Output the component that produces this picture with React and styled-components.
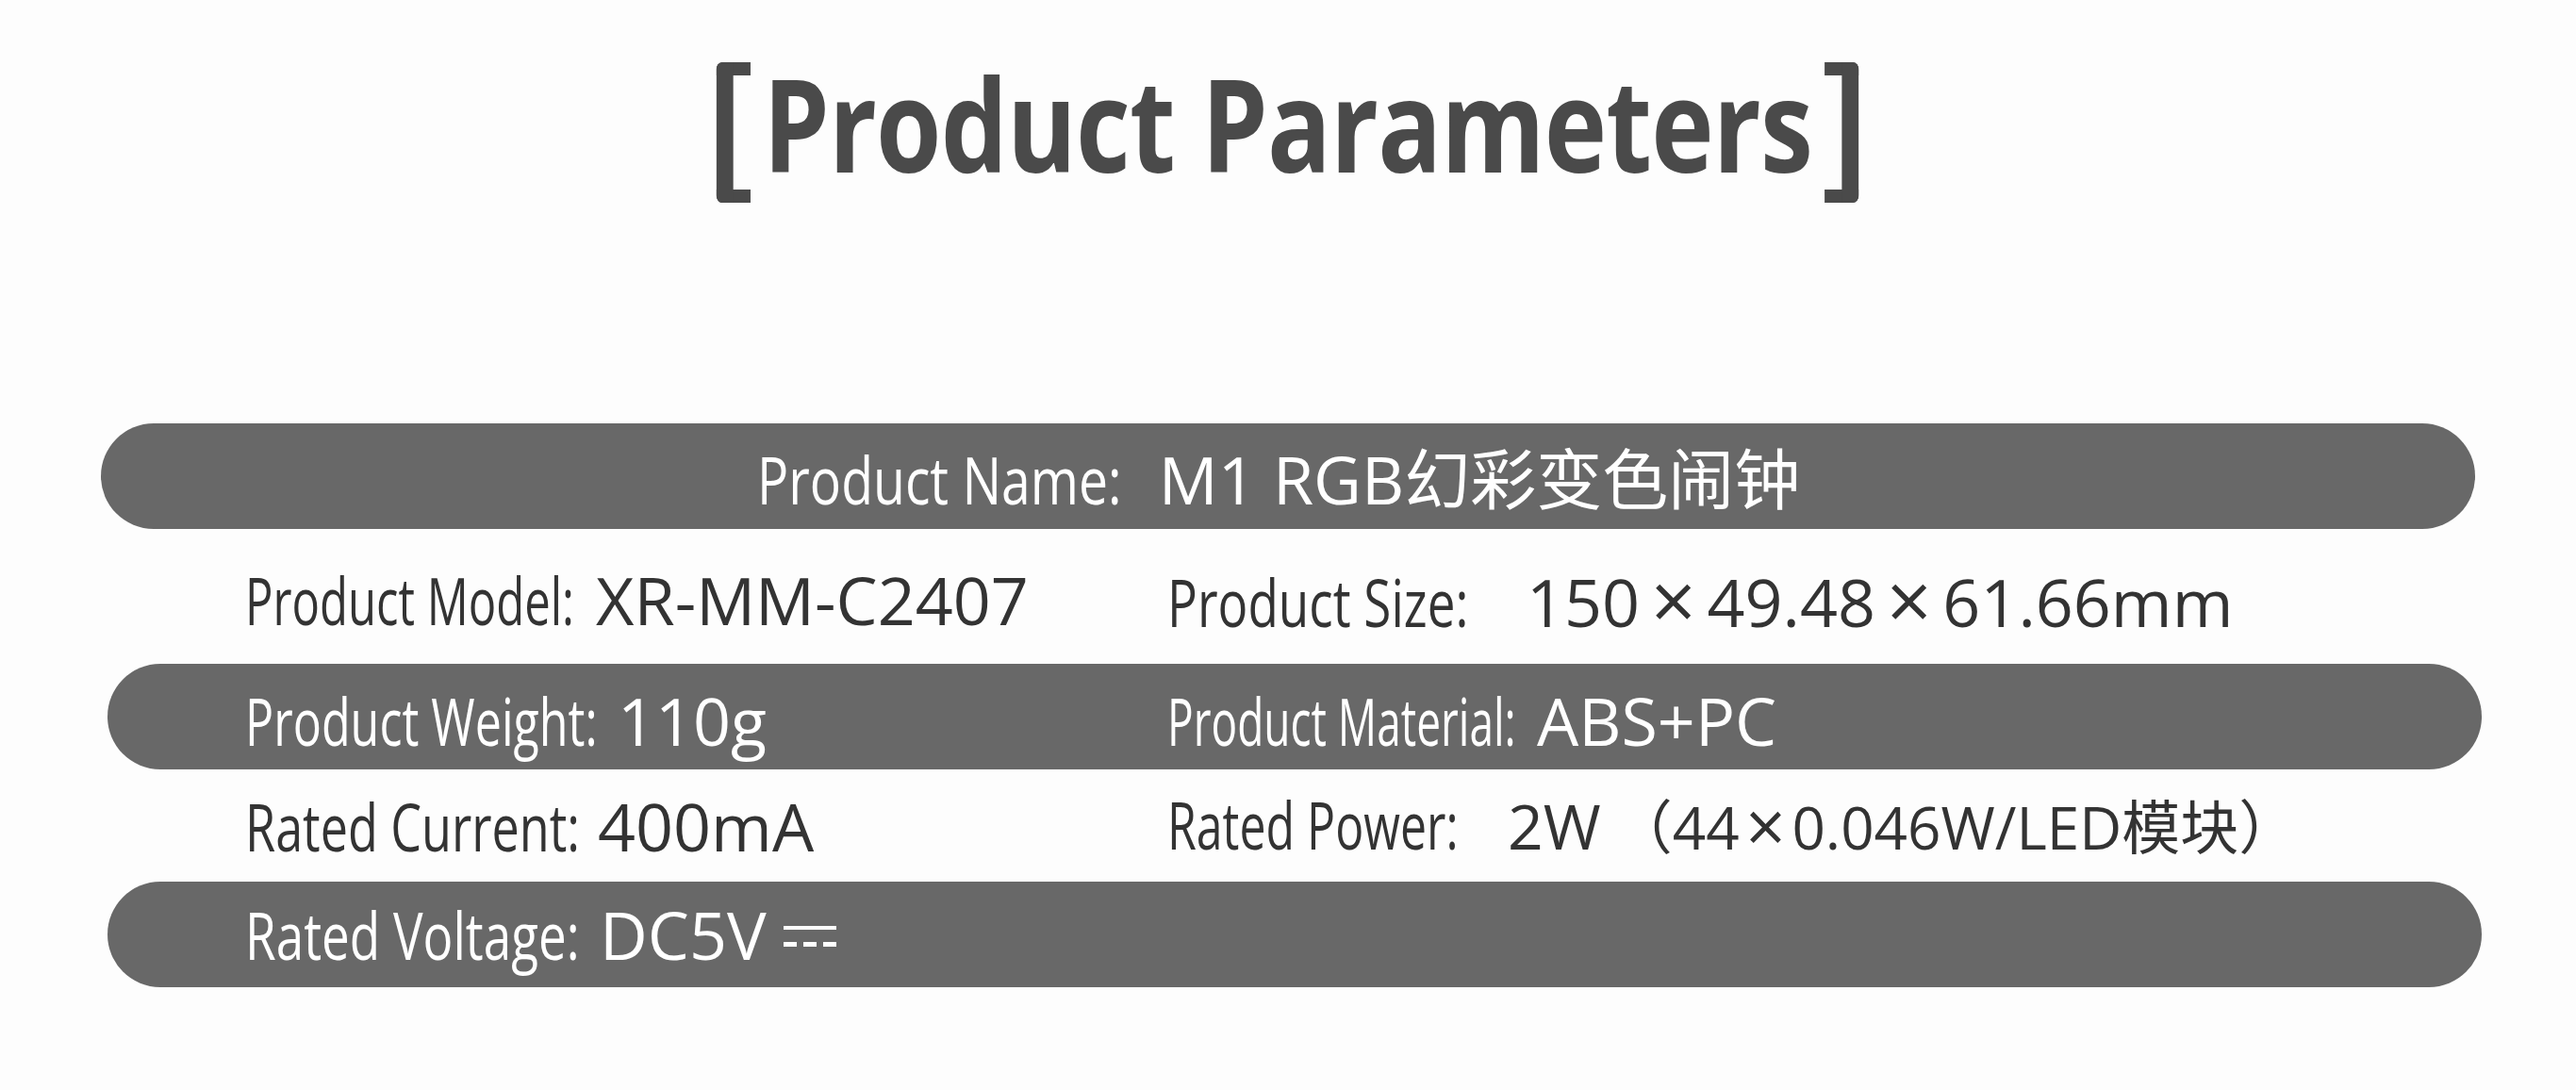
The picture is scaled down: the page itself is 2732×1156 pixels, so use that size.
import React from "react";
import styled, { createGlobalStyle, css } from "styled-components";

const GlobalStyle = createGlobalStyle`
  html, body {
    margin: 0;
    padding: 0;
    background: #fdfdfd;
  }
  body {
    font-family: "Open Sans", "Noto Sans CJK SC", sans-serif;
  }
`;

const Page = styled.div`
  width: 2732px;
  height: 1156px;
  overflow: hidden;
  background: #fdfdfd;
  display: flex;
  flex-direction: column;
`;

const Header = styled.header`
  box-sizing: border-box;
  height: 449px;
  padding-top: 63px;
  display: flex;
  justify-content: center;
  align-items: flex-start;
`;

const TitleRow = styled.h1`
  margin: 0;
  display: flex;
  align-items: center;
  gap: 16px;
  color: #4a4a4a;
  transform: scaleX(0.826);
  transform-origin: center;
`;

const Bracket = styled.span`
  box-sizing: border-box;
  width: 44px;
  height: 149px;
  border: 14px solid #4a4a4a;
  ${(p) =>
    p.$side === "left"
      ? css`
          border-left-width: 22px;
          border-right: none;
          border-radius: 8px 0 0 8px;
        `
      : css`
          border-right-width: 22px;
          border-left: none;
          border-radius: 0 8px 8px 0;
        `}
`;

const TitleText = styled.span`
  font-family: "Open Sans", sans-serif;
  font-weight: 700;
  font-size: 136px;
  line-height: 1;
  letter-spacing: -1px;
  white-space: nowrap;
  padding-bottom: 18px;
`;

const Table = styled.section`
  display: flex;
  flex-direction: column;
`;

const Row = styled.div`
  box-sizing: border-box;
  width: 2518px;
  height: ${(p) => p.$h}px;
  margin-left: ${(p) => p.$x}px;
  padding-left: ${(p) => (p.$center ? 0 : 260 - p.$x)}px;
  padding-right: ${(p) => (p.$center ? 20 : 0)}px;
  padding-top: ${(p) => p.$dy || 0}px;
  display: flex;
  align-items: center;
  justify-content: ${(p) => (p.$center ? "center" : "flex-start")};
  ${(p) =>
    p.$bar
      ? css`
          background: #686868;
          border-radius: 56px;
          color: #ffffff;
        `
      : css`
          color: #333333;
        `}
`;

const Cell = styled.div`
  display: flex;
  align-items: baseline;
  flex: none;
  width: ${(p) => (p.$w ? `${p.$w}px` : "auto")};
  white-space: nowrap;
`;

const Label = styled.span`
  display: inline-block;
  flex: none;
  width: ${(p) => p.$w}px;
  font-size: 70px;
  font-weight: 400;
  line-height: 1;
  white-space: nowrap;
  transform: scaleX(${(p) => p.$sx});
  transform-origin: left center;
`;

const Value = styled.span`
  font-size: ${(p) => p.$size || 70}px;
  font-weight: 400;
  line-height: 1;
  white-space: nowrap;
`;

const Note = styled.span`
  display: inline-block;
  margin-left: 14px;
  font-size: 62px;
  line-height: 1;
`;

const Cross = styled.span`
  display: inline-block;
  width: ${(p) => p.$em || 0.85}em;
  font-size: 1.2em;
  line-height: 1;
  text-align: center;
  vertical-align: -0.04em;
`;

const DcMark = styled.svg`
  flex: none;
  margin-left: 18px;
  width: 56px;
  height: 36px;
`;

const DcSymbol = () => (
  <DcMark viewBox="0 0 56 36" aria-label="direct current">
    <rect x="0" y="0" width="56" height="4" fill="currentColor" />
    <rect x="0" y="17" width="14" height="5" fill="currentColor" />
    <rect x="21" y="17" width="14" height="5" fill="currentColor" />
    <rect x="42" y="17" width="14" height="5" fill="currentColor" />
  </DcMark>
);

const rows = [
  {
    bar: true,
    x: 107,
    h: 112,
    dy: 6,
    center: true,
    cells: [
      {
        label: "Product Name:",
        w: 426,
        sx: 0.79,
        value: "M1 RGB幻彩变色闹钟",
      },
    ],
  },
  {
    bar: false,
    x: 114,
    h: 143,
    dy: 7,
    cells: [
      { label: "Product Model:", w: 372, sx: 0.7, value: "XR-MM-C2407" },
      {
        label: "Product Size:",
        w: 381,
        sx: 0.757,
        value: (
          <>
            150<Cross>×</Cross>49.48<Cross>×</Cross>61.66mm
          </>
        ),
      },
    ],
  },
  {
    bar: true,
    x: 114,
    h: 112,
    dy: 7,
    cells: [
      { label: "Product Weight:", w: 395, sx: 0.717, value: "110g" },
      { label: "Product Material:", w: 392, sx: 0.657, value: "ABS+PC" },
    ],
  },
  {
    bar: false,
    x: 114,
    h: 119,
    dy: 0,
    cells: [
      { label: "Rated Current:", w: 374, sx: 0.744, value: "400mA" },
      {
        label: "Rated Power:",
        w: 361,
        sx: 0.714,
        size: 66,
        value: (
          <>
            2W
            <Note>
              （44<Cross $em={0.75}>×</Cross>0.046W/LED模块）
            </Note>
          </>
        ),
      },
    ],
  },
  {
    bar: true,
    x: 114,
    h: 112,
    dy: 0,
    cells: [
      {
        label: "Rated Voltage:",
        w: 376,
        sx: 0.757,
        value: "DC5V",
        dc: true,
      },
    ],
  },
];

export default function App() {
  return (
    <>
      <GlobalStyle />
      <Page>
        <Header>
          <TitleRow>
            <Bracket $side="left" />
            <TitleText>Product Parameters</TitleText>
            <Bracket $side="right" />
          </TitleRow>
        </Header>
        <Table>
          {rows.map((row, i) => (
            <Row
              key={i}
              $bar={row.bar}
              $x={row.x}
              $h={row.h}
              $dy={row.dy}
              $center={row.center}
            >
              {row.cells.map((c, j) => (
                <Cell
                  key={j}
                  $w={!row.center && j === 0 && row.cells.length > 1 ? 978 : 0}
                >
                  <Label $w={c.w} $sx={c.sx}>
                    {c.label}
                  </Label>
                  <Value $size={c.size}>{c.value}</Value>
                  {c.dc && <DcSymbol />}
                </Cell>
              ))}
            </Row>
          ))}
        </Table>
      </Page>
    </>
  );
}
